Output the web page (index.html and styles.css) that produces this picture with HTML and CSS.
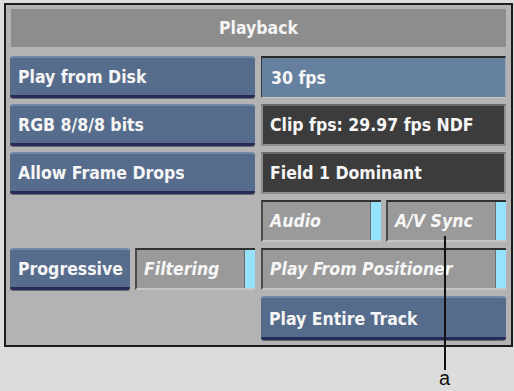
FILE: index.html
```html
<!DOCTYPE html>
<html lang="en">
<head>
  <meta charset="UTF-8">
  <title>Playback</title>
  <link rel="stylesheet" href="styles.css">
</head>
<body>

  <div class="panel">
    <div class="title">Playback</div>

    <div class="btn">Play from Disk</div>
    <div class="field field-blue">30 fps</div>

    <div class="btn">RGB 8/8/8 bits</div>
    <div class="field field-dark">Clip fps: 29.97 fps NDF</div>

    <div class="btn">Allow Frame Drops</div>
    <div class="field field-dark">Field 1 Dominant</div>

    <div class="empty"></div>
    <div class="pair">
      <div class="toggle">Audio<span class="lamp"></span></div>
      <div class="toggle">A/V Sync<span class="lamp"></span></div>
    </div>

    <div class="pair">
      <div class="btn">Progressive</div>
      <div class="toggle">Filtering<span class="lamp"></span></div>
    </div>
    <div class="toggle">Play From Positioner<span class="lamp"></span></div>

    <div class="empty"></div>
    <div class="btn btn-tall">Play Entire Track</div>
  </div>

  <!-- callout -->
  <div class="callout-line"></div>
  <div class="callout-label">a</div>

</body>
</html>
```

FILE: styles.css
```css
body {
  margin: 0;
  background: #dcdcdc;
  font-family: "DejaVu Sans Condensed", "Liberation Sans", sans-serif;
  width: 514px;
  height: 391px;
  position: relative;
}

.panel {
  margin: 3px 0 0 4px;
  width: 496px;
  background: #b3b3b3;
  border: 2px solid #1c1c1c;
  padding: 4px 5px 5px 4px;
  display: grid;
  grid-template-columns: 245px 245px;
  grid-template-rows: 41px repeat(5, 42px) 44px;
  column-gap: 6px;
  row-gap: 6px;
}

.title {
  grid-column: 1 / 3;
  margin: 0 0 3px 1px;
  background: #8d8d8d;
  color: #f4f4f4;
  font-weight: bold;
  font-size: 17.5px;
  display: flex;
  align-items: center;
  justify-content: center;
}

.btn, .field, .toggle {
  color: #f6f6f6;
  font-weight: bold;
  font-size: 17.5px;
  display: flex;
  align-items: center;
  padding-left: 8px;
  box-sizing: border-box;
  white-space: nowrap;
}

.btn {
  background: #566c8c;
  border-top: 2px solid #7689a6;
  border-bottom: 3px solid #272a58;
  border-radius: 3px;
  box-shadow: 0 1px 0 #6d6d6d;
}

.btn-tall {
  padding-top: 2px;
}

.field {
  padding-left: 9px;
}

.field-blue {
  background: #6680a0;
  border-top: 2px solid #2a2a2a;
  border-left: 1px solid #3a3a3a;
  border-right: 1px solid #9aa6b6;
  border-bottom: 1px solid #c8c8c8;
}

.field-dark {
  background: #3c3c3c;
  border: 2px solid #8e8e8e;
  border-top-color: #6a6a6a;
  padding-left: 7px;
}

.pair {
  display: grid;
  grid-template-columns: 1fr 1fr;
  column-gap: 5px;
}

.toggle {
  position: relative;
  background: #9a9a9a;
  border-top: 2px solid #303030;
  border-left: 2px solid #4a4a4a;
  border-bottom: 2px solid #c6c6c6;
  font-style: italic;
  padding-left: 7px;
}

.lamp {
  position: absolute;
  right: 0;
  top: 0;
  bottom: 0;
  width: 10px;
  background: #96e2fc;
  border-left: 1px solid #6d6d6d;
}

.callout-line {
  position: absolute;
  left: 444px;
  top: 236px;
  width: 2px;
  height: 134px;
  background: #111;
}

.callout-label {
  position: absolute;
  left: 439px;
  top: 368px;
  font-family: "Liberation Sans", Arial, sans-serif;
  font-size: 20px;
  line-height: 20px;
  color: #111;
}
```
